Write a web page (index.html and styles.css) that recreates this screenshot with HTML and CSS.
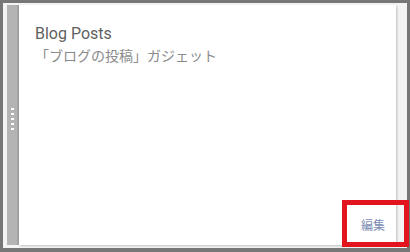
FILE: index.html
```html
<html>
	<head>
		<link rel="stylesheet" href="styles.css">
	</head>
	<body>
		<div class="frame">
			<div class="handle">
				<span class="grip"></span>
				<span class="grip"></span>
				<span class="grip"></span>
				<span class="grip"></span>
				<span class="grip"></span>
			</div>
			<div class="card">
				<p class="card-title">Blog Posts</p>
				<p class="card-sub">「ブログの投稿」ガジェット</p>
				<a class="card-edit">編集</a>
			</div>
			<div class="highlight"></div>
		</div>
	</body>
</html>
```

FILE: styles.css
```css
html,body{
	margin:0;
	padding:0;
}
.frame{
	position:relative;
	width:410px;
	height:252px;
	box-sizing:border-box;
	border:3px solid #777;
	border-bottom-width:4px;
	background:#f4f4f4;
	padding:2px 11px 3px 4px;
	display:flex;
	font-family:Roboto,"Noto Sans CJK JP",sans-serif;
}
.frame .handle{
	width:10px;
	background:#b4b4b4;
	border-right:2px solid #a2a2a2;
	display:flex;
	flex-direction:column;
	align-items:center;
	justify-content:center;
	gap:3px;
	padding-bottom:12px;
}
.frame .handle .grip{
	display:block;
	width:3px;
	height:2px;
	background:#fff;
}
.frame .card{
	flex:1;
	background:#fff;
	box-shadow:1px 1px 2px rgba(0,0,0,0.22);
	padding:19px 11px 12px 16px;
	display:flex;
	flex-direction:column;
}
.frame .card .card-title{
	margin:0;
	font-size:16px;
	line-height:19px;
	color:#5f5f5f;
}
.frame .card .card-sub{
	margin:3px 0 0 0;
	font-size:14px;
	line-height:20px;
	color:#8a8a8a;
}
.frame .card .card-edit{
	margin-top:auto;
	align-self:flex-end;
	font-size:12px;
	line-height:14px;
	color:#7d8db3;
	cursor:pointer;
}
.frame .highlight{
	position:absolute;
	left:339px;
	top:197px;
	width:57px;
	height:37px;
	border:5px solid #e2141d;
}
```
